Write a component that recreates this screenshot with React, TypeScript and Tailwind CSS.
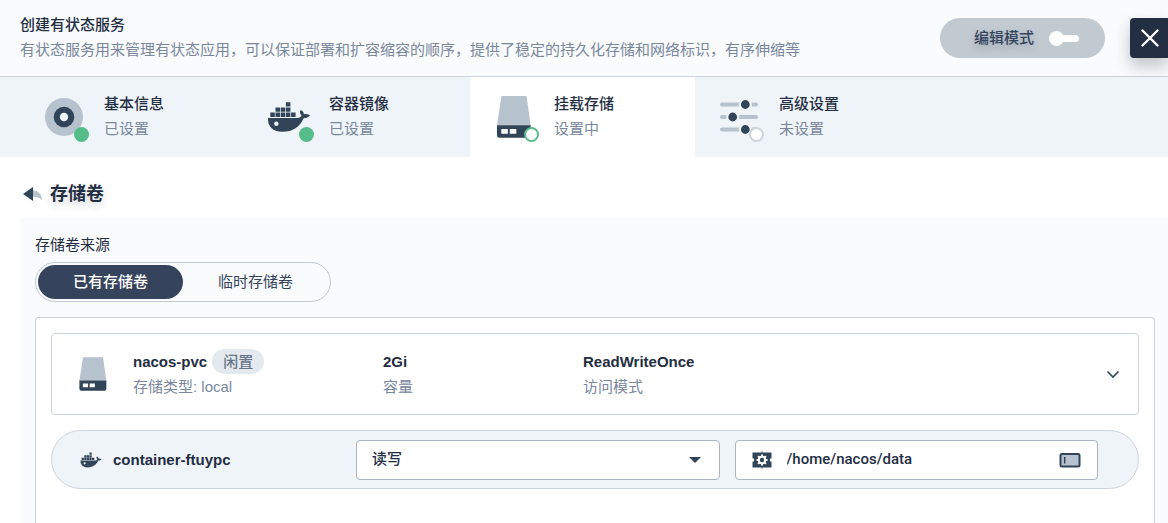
import { useState } from "react";
import type { ReactNode } from "react";

type StepStatus = "done" | "current" | "pending";

interface Step {
  key: string;
  title: string;
  state: string;
  status: StepStatus;
  icon: ReactNode;
}

function GearIcon() {
  return (
    <svg className="size-10 overflow-visible" viewBox="0 0 40 40">
      <circle cx="20" cy="20" r="19" fill="#b6c2cd" />
      <circle cx="20" cy="20" r="10.3" fill="#324558" />
      <circle cx="20" cy="20" r="4.2" fill="#eff4f9" />
    </svg>
  );
}

function DockerIcon({ className }: { className: string }) {
  return (
    <svg className={className} viewBox="0 0 40 40" fill="#324558">
      <path d="M16.9 5.2h4.5v4.4h-4.5zM6.5 10.4H11v4.4H6.5zM11.7 10.4h4.5v4.4h-4.5zM16.9 10.4h4.5v4.4h-4.5zM1.3 15.5h4.5v4.4H1.3zM6.5 15.5H11v4.4H6.5zM11.7 15.5h4.5v4.4h-4.5zM16.9 15.5h4.5v4.4h-4.5zM22.1 15.5h4.5v4.4h-4.5z" />
      <path d="M-1 21H28C30.5 21 32 20 32.5 18.5C30.6 16.5 30.6 14.5 31.8 13C33.8 14 34.9 15.5 34.8 17.2C37 16.7 39 17.2 41 18.3C39.7 20.3 37.5 21.2 34.6 21.2C31 29.5 24 34.8 13 34.8C4 34.8 -1.5 29.5 -1 21Z" />
      <circle cx="7.3" cy="26.7" r="2.2" fill="#eff4f9" />
    </svg>
  );
}

function DiskIcon({ className }: { className: string }) {
  return (
    <svg className={className} viewBox="0 0 40 40">
      <path d="M7.5 -1H32.5L36.7 28.5H3Z" fill="#b6c2cd" />
      <path d="M3 28.2H36.7V38.5a2.3 2.3 0 0 1-2.3 2.3H5.3A2.3 2.3 0 0 1 3 38.5Z" fill="#324558" />
      <path d="M7.3 32h6.5v4.7H7.3zM15.8 32h6.5v4.7h-6.5z" fill="#fff" />
    </svg>
  );
}

function SlidersIcon() {
  return (
    <svg className="size-10 overflow-visible" viewBox="0 0 40 40">
      <path d="M3 7.5H37M3 20H37M3 32.5H37" stroke="#b6c2cd" strokeWidth="4" strokeLinecap="round" />
      <g fill="#324558" stroke="#eff4f9" strokeWidth="2.2">
        <circle cx="26.3" cy="7.5" r="5.5" />
        <circle cx="13.7" cy="20" r="5.5" />
        <circle cx="26.3" cy="32.5" r="5.5" />
      </g>
    </svg>
  );
}

function BackIcon() {
  return (
    <svg className="h-4 w-5" viewBox="0 0 20 16">
      <path d="M10 4.5C15.5 4.5 19 8.5 19 14.5C17 11.5 14.5 10.7 10 10.7Z" fill="#b6c2cd" />
      <path d="M0 8L10 1V15Z" fill="#324558" />
    </svg>
  );
}

function MountIcon() {
  return (
    <svg className="size-5 shrink-0" viewBox="0 0 20 20">
      <path d="M9 1h2v2H9zM9 17h2v2H9z" fill="#b6c2cd" />
      <path d="M.5 2.5h19v6h-1.500v3h1.500v6H.5v-6H2v-3H.5z" fill="#324558" />
      <path d="M10 4.5v11M4.5 10h11M6.100 6.100l7.800 7.800M13.900 6.100l-7.800 7.800" stroke="#fff" strokeWidth="2" />
      <circle cx="10" cy="10" r="4.2" fill="#fff" />
      <circle cx="10" cy="10" r="2.2" fill="#324558" />
    </svg>
  );
}

function PathIcon() {
  return (
    <svg className="h-4 w-[22px]" viewBox="0 0 22 16">
      <rect x="1.5" y="2" width="19" height="12.5" rx="1.5" fill="#b6c2cd" stroke="#324558" strokeWidth="2" />
      <path d="M5.7 5v6.5" stroke="#324558" strokeWidth="1.5" />
    </svg>
  );
}

const STEPS: Step[] = [
  { key: "base", title: "基本信息", state: "已设置", status: "done", icon: <GearIcon /> },
  {
    key: "image",
    title: "容器镜像",
    state: "已设置",
    status: "done",
    icon: <DockerIcon className="size-10 overflow-visible" />,
  },
  {
    key: "storage",
    title: "挂载存储",
    state: "设置中",
    status: "current",
    icon: <DiskIcon className="size-10 overflow-visible" />,
  },
  { key: "advanced", title: "高级设置", state: "未设置", status: "pending", icon: <SlidersIcon /> },
];

const BADGES: Record<StepStatus, string> = {
  done: "bg-[#55bc8a]",
  current: "bg-white border-2 border-[#55bc8a]",
  pending: "bg-white border-2 border-[#ccd3db]",
};

const SOURCES = ["已有存储卷", "临时存储卷"];

export default function App() {
  const [source, setSource] = useState(SOURCES[0]);
  const [editMode, setEditMode] = useState(false);
  const [mountPath, setMountPath] = useState("/home/nacos/data");

  return (
    <div className="flex min-h-screen flex-col bg-white font-[Roboto,'Noto_Sans_CJK_SC',sans-serif] text-[15px] leading-[25px] text-[#79879c]">
      {/* Header */}
      <header className="flex items-center justify-between border-b border-[#ccd3db] bg-[#f9fbfd] py-[13px] pl-5">
        <div>
          <h1 className="font-medium text-[#242e42]">创建有状态服务</h1>
          <p>有状态服务用来管理有状态应用，可以保证部署和扩容缩容的顺序，提供了稳定的持久化存储和网络标识，有序伸缩等</p>
        </div>
        <div className="flex shrink-0 items-center gap-[25px]">
          <button
            type="button"
            aria-pressed={editMode}
            onClick={() => setEditMode(!editMode)}
            className="flex h-10 items-center gap-[15px] rounded-full bg-[#c1c9d1] pr-[26px] pl-[34px] font-medium text-[#36435c] text-shadow-[0_4px_8px_rgba(36,46,66,0.2)]"
          >
            编辑模式
            <span className="flex items-center">
              <span className="size-[15px] rounded-full bg-white" />
              <span className="-ml-1 h-[7px] w-[19px] rounded-r-full bg-white" />
            </span>
          </button>
          <button
            type="button"
            aria-label="关闭"
            className="flex h-10 w-[38px] items-center justify-end rounded-l bg-[#242e42] pr-2 shadow-[0_8px_16px_rgba(36,46,66,0.28)]"
          >
            <svg className="size-5" viewBox="0 0 20 20" stroke="#fff" strokeWidth="2.4" strokeLinecap="round">
              <path d="M2.5 2.5L17.5 17.5M17.5 2.5L2.5 17.5" />
            </svg>
          </button>
        </div>
      </header>

      {/* Steps */}
      <nav className="flex bg-[#eff4f9] pl-5">
        {STEPS.map((step) => (
          <button
            key={step.key}
            type="button"
            className={`flex w-[225px] items-center gap-5 py-[15px] pl-6 text-left ${
              step.status === "current" ? "bg-white" : ""
            }`}
          >
            <span className="relative">
              {step.icon}
              <span className={`absolute -right-[5px] -bottom-[5px] size-[15px] rounded-full ${BADGES[step.status]}`} />
            </span>
            <span>
              <span className="block font-medium text-[#242e42]">{step.title}</span>
              <span className="block">{step.state}</span>
            </span>
          </button>
        ))}
      </nav>

      {/* Volume form */}
      <main className="flex flex-1 flex-col pt-6 pl-5">
        <div className="flex items-center gap-[7px] pl-[3px]">
          <button type="button" aria-label="返回">
            <BackIcon />
          </button>
          <h2 className="text-lg leading-[25px] font-bold text-[#242e42] text-shadow-[0_4px_8px_rgba(36,46,66,0.2)]">存储卷</h2>
        </div>

        <div className="mt-3 flex flex-1 flex-col rounded-tl bg-[#f9fbfd] pt-[15px] pr-[13px] pl-[15px]">
          <p className="text-[#242e42]">存储卷来源</p>
          <div className="mt-1 flex h-10 w-[296px] rounded-full border border-[#c1c9d1] p-[2px]">
            {SOURCES.map((name) => (
              <button
                key={name}
                type="button"
                onClick={() => setSource(name)}
                className={`flex-1 rounded-full ${
                  source === name ? "bg-[#36435c] font-medium text-white" : "text-[#36435c]"
                }`}
              >
                {name}
              </button>
            ))}
          </div>

          <div className="mt-[15px] flex-1 rounded-t border border-b-0 border-[#ccd3db] bg-white p-[15px]">
            <section className="flex items-center rounded border border-[#ccd3db] py-[15px] pr-[15px] pl-[25px] font-['Liberation_Sans','Noto_Sans_CJK_SC',sans-serif]">
              <DiskIcon className="size-8 overflow-visible" />
              <div className="ml-6 w-[250px]">
                <div className="flex items-center gap-[5px]">
                  <span className="font-bold text-[#242e42]">nacos-pvc</span>
                  <span className="rounded-full bg-[#e3e9ef] px-[11px] font-medium text-[#657587]">闲置</span>
                </div>
                <p>存储类型: local</p>
              </div>
              <div className="w-[200px]">
                <p className="font-bold text-[#242e42]">2Gi</p>
                <p>容量</p>
              </div>
              <div className="flex-1">
                <p className="font-bold text-[#242e42]">ReadWriteOnce</p>
                <p>访问模式</p>
              </div>
              <button type="button" aria-label="展开" className="p-[2px]">
                <svg className="size-4" viewBox="0 0 16 16" fill="none" stroke="#324558" strokeWidth="1.6">
                  <path d="M2.5 5.5L8 11L13.5 5.5" />
                </svg>
              </button>
            </section>

            <section className="mt-[15px] flex min-h-[59px] items-center gap-[15px] rounded-full border border-[#ccd3db] bg-[#eff4f9] pr-10 pl-7">
              <div className="flex w-[261px] items-center gap-3 pl-px">
                <DockerIcon className="size-5 overflow-visible" />
                <span className="font-['Liberation_Sans',sans-serif] font-bold text-[#242e42]">container-ftuypc</span>
              </div>
              <div className="relative min-w-0 flex-1">
                <select
                  aria-label="读写权限"
                  defaultValue="rw"
                  className="block h-10 w-full appearance-none rounded border border-[#abb4be] bg-white px-[15px] font-medium text-[#242e42]"
                >
                  <option value="rw">读写</option>
                  <option value="ro">只读</option>
                </select>
                <svg className="pointer-events-none absolute top-[17px] right-[19px] h-[6px] w-3" viewBox="0 0 12 6">
                  <path d="M0 0H12L6 6Z" fill="#324558" />
                </svg>
              </div>
              <div className="min-w-0 flex-1">
                <div className="flex h-10 items-center rounded border border-[#abb4be] bg-white px-4">
                  <MountIcon />
                  <input
                    aria-label="挂载路径"
                    value={mountPath}
                    onChange={(e) => setMountPath(e.target.value)}
                    className="ml-[15px] min-w-0 flex-1 font-medium text-[#242e42] outline-none"
                  />
                  <PathIcon />
                </div>
              </div>
            </section>
          </div>
        </div>
      </main>
    </div>
  );
}
